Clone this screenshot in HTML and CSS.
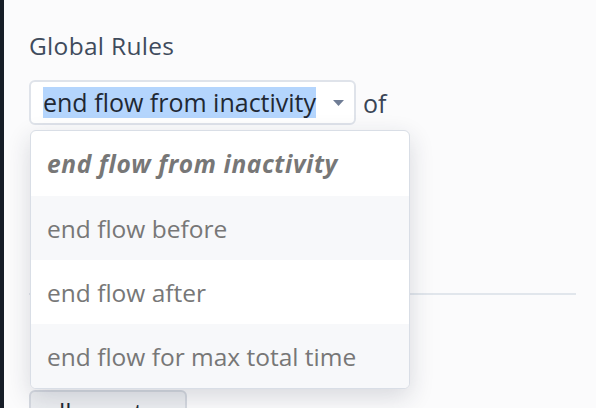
FILE: index.html
```html
<!DOCTYPE html>
<html>
<head>
<meta charset="utf-8">
<link rel="stylesheet" href="styles.css">
</head>
<body>
<div class="app">
  <div class="rail"></div>
  <main class="content">
    <h2 class="title">Global Rules</h2>
    <div class="rule-row">
      <div class="select-wrap">
        <div class="select">
          <span class="selected-text">end flow from inactivity</span>
          <svg class="caret" width="11" height="6" viewBox="0 0 11 6"><path d="M0 0h11L5.5 6z" fill="#6f7d95"/></svg>
        </div>
        <ul class="menu">
          <li class="item active">end flow from inactivity</li>
          <li class="item alt">end flow before</li>
          <li class="item">end flow after</li>
          <li class="item alt">end flow for max total time</li>
        </ul>
      </div>
      <span class="of">of</span>
    </div>
    <div class="spacer"></div>
    <hr class="divider">
    <div class="spacer2"></div>
    <button class="events-btn">all events</button>
  </main>
</div>
</body>
</html>
```
FILE: styles.css
```css
* { box-sizing: border-box; }
html, body { margin: 0; padding: 0; }
body {
  background: #fbfbfc;
  font-family: "Open Sans", "Noto Sans", sans-serif;
  overflow: hidden;
  width: 596px;
  height: 408px;
}
.app { display: flex; height: 408px; overflow: hidden; }
.rail { width: 4px; background: #161d27; flex: none; }
.content { flex: 1; padding: 0 20px 0 25px; overflow: hidden; }
.title {
  margin: 31px 0 0 0;
  font-size: 24.5px;
  font-weight: 400;
  color: #3f4b5d;
  line-height: 30px;
  letter-spacing: 0.3px;
}
.rule-row {
  margin-top: 19px;
  display: flex;
  align-items: center;
  gap: 7px;
}
.select-wrap { position: relative; }
.select {
  width: 327px;
  height: 45px;
  border: 2px solid #dfe3ea;
  border-radius: 6px;
  background: #fff;
  display: flex;
  align-items: center;
  padding: 0 10px 0 12px;
  justify-content: space-between;
}
.selected-text {
  background: #b4d5fd;
  color: #1f2833;
  font-size: 25px;
  line-height: 31px;
}
.of { font-size: 25px; color: #3a4556; }
.menu {
  position: absolute;
  left: 1px;
  top: 50px;
  width: 380px;
  margin: 0;
  padding: 0;
  list-style: none;
  background: #fff;
  border: 1.5px solid #d9dee6;
  border-radius: 6px;
  box-shadow: 0 8px 24px rgba(30, 40, 60, 0.16);
  overflow: hidden;
  z-index: 10;
}
.item {
  height: 64px;
  display: flex;
  align-items: center;
  padding-left: 16px;
  font-size: 24.5px;
  color: #777777;
}
.item.active {
  font-weight: 700;
  font-style: italic;
  height: 65px;
  letter-spacing: 0.6px;
}
.item.alt { background: #f7f8fa; }
.spacer { height: 168px; }
.divider {
  margin: 0;
  border: 0;
  height: 2px;
  background: #e1e6ec;
}
.spacer2 { height: 95px; }
.events-btn {
  width: 158px;
  height: 45px;
  border: 2px solid #d5d9e0;
  border-radius: 6px;
  background: #eceef1;
  font-family: inherit;
  font-size: 25px;
  line-height: 31px;
  color: #1f2833;
  text-align: left;
  padding: 0 14px;
}
```
